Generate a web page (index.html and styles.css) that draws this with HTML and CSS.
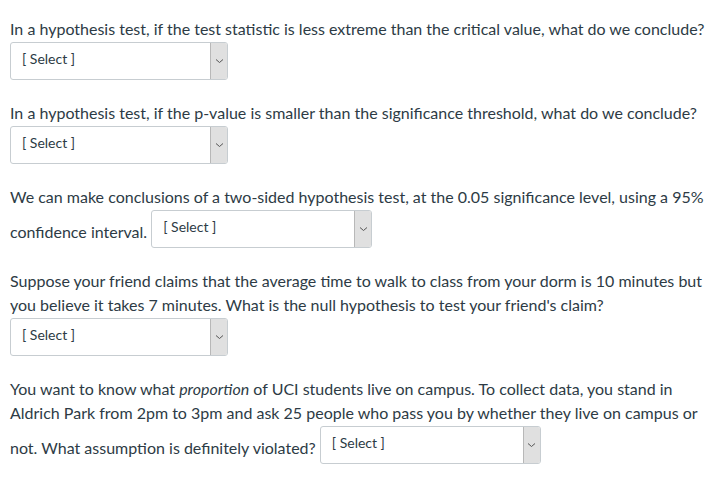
FILE: index.html
```html
<!DOCTYPE html>
<html>
<head>
<meta charset="utf-8">
<link rel="stylesheet" href="styles.css">
</head>
<body>
<div class="quiz">
  <div class="question">
    <p class="text">In a hypothesis test, if the test statistic is less extreme than the critical value, what do we conclude?</p>
    <span class="select"><span class="label">[ Select ]</span><span class="arrow"><svg width="9" height="6" viewBox="0 0 9 6"><path d="M1 1.5 L4.5 4.5 L8 1.5" fill="none" stroke="#555" stroke-width="1"/></svg></span></span>
  </div>
  <div class="question">
    <p class="text">In a hypothesis test, if the p-value is smaller than the significance threshold, what do we conclude?</p>
    <span class="select"><span class="label">[ Select ]</span><span class="arrow"><svg width="9" height="6" viewBox="0 0 9 6"><path d="M1 1.5 L4.5 4.5 L8 1.5" fill="none" stroke="#555" stroke-width="1"/></svg></span></span>
  </div>
  <div class="question">
    <p class="text">We can make conclusions of a two-sided hypothesis test, at the 0.05 significance level, using a 95% confidence interval. <span class="select inline"><span class="label">[ Select ]</span><span class="arrow"><svg width="9" height="6" viewBox="0 0 9 6"><path d="M1 1.5 L4.5 4.5 L8 1.5" fill="none" stroke="#555" stroke-width="1"/></svg></span></span></p>
  </div>
  <div class="question">
    <p class="text">Suppose your friend claims that the average time to walk to class from your dorm is 10 minutes but you believe it takes 7 minutes. What is the null hypothesis to test your friend's claim?</p>
    <span class="select"><span class="label">[ Select ]</span><span class="arrow"><svg width="9" height="6" viewBox="0 0 9 6"><path d="M1 1.5 L4.5 4.5 L8 1.5" fill="none" stroke="#555" stroke-width="1"/></svg></span></span>
  </div>
  <div class="question">
    <p class="text">You want to know what <em>proportion</em> of UCI students live on campus. To collect data, you stand in Aldrich Park from 2pm to 3pm and ask 25 people who pass you by whether they live on campus or not. What assumption is definitely violated? <span class="select inline"><span class="label">[ Select ]</span><span class="arrow"><svg width="9" height="6" viewBox="0 0 9 6"><path d="M1 1.5 L4.5 4.5 L8 1.5" fill="none" stroke="#555" stroke-width="1"/></svg></span></span></p>
  </div>
</div>
</body>
</html>
```

FILE: styles.css
```css
html, body {
  margin: 0;
  padding: 0;
  background: #ffffff;
}

.quiz {
  width: 703px;
  padding: 17px 10px 0 10px;
  font-family: Lato, "Liberation Sans", sans-serif;
  font-size: 16px;
  line-height: 24px;
  color: #2d3b45;
}

.question {
  margin-bottom: 21px;
}

.text {
  margin: 0;
}

.select {
  display: flex;
  width: 218px;
  height: 38px;
  box-sizing: border-box;
  border: 1px solid #c7cdd1;
  border-radius: 3px;
  background: #ffffff;
  overflow: hidden;
  margin-top: 1px;
}

.select.inline {
  display: inline-flex;
  vertical-align: 6px;
  width: 221px;
  margin: 1px 0 0 0;
  line-height: normal;
}

.label {
  flex: 1;
  padding: 0 0 2px 11px;
  font-size: 14px;
  line-height: 32px;
  color: #2d3b45;
}

.arrow {
  width: 16px;
  background: #e0e0e0;
  border-left: 1px solid #b8b8b8;
  display: flex;
  align-items: center;
  justify-content: center;
}
```
